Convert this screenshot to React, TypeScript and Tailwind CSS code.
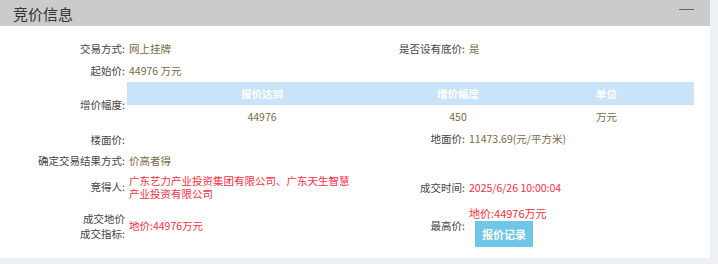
import React from "react";

const font = { fontFamily: '"Noto Sans CJK SC", "Liberation Sans", sans-serif' };

function Label({ children }: { children: React.ReactNode }) {
    return <div className="flex items-center justify-end pr-[2px] text-[#444]">{children}</div>;
}

function Value({ children, red }: { children: React.ReactNode; red?: boolean }) {
    return (
        <div className={"flex items-center pl-[2px] " + (red ? "text-[#ff2d3d]" : "text-[#7b6a45]")}>
            {children}
        </div>
    );
}

export default function App() {
    return (
        <div className="w-[718px] h-[264px] bg-[#edf1f4] flex items-start" style={font}>
            <div className="w-[710px] h-[258px] bg-white flex flex-col">
                <div className="h-[26px] bg-[#cbcbcb] flex items-center justify-between pl-[13px] pr-[16px]">
                    <span className="text-[15px] text-[#333] leading-none">竞价信息</span>
                    <span className="w-[15px] h-[1px] bg-[#666] mb-[8px]"></span>
                </div>
                <div className="grid grid-cols-[127px_228px_112px_226px] text-[10.5px] leading-[13px] pt-[12px]">
                    {/* row 1 */}
                    <Label>交易方式:</Label>
                    <div className="h-[21px] flex"><Value>网上挂牌</Value></div>
                    <Label>是否设有底价:</Label>
                    <Value>是</Value>
                    {/* row 2 */}
                    <Label>起始价:</Label>
                    <div className="h-[22px] flex col-span-3"><Value>44976 万元</Value></div>
                    {/* row 3 */}
                    <Label>增价幅度:</Label>
                    <div className="col-span-3 pt-[1px]">
                        <div className="grid grid-cols-[270px_122px_175px] text-center">
                            <div className="h-[23px] bg-[#c9e4f8] col-span-3 grid grid-cols-[270px_122px_175px] items-center font-bold text-white">
                                <span>报价达到</span>
                                <span>增价幅度</span>
                                <span>单位</span>
                            </div>
                            <div className="h-[23px] flex items-center justify-center text-[#7b6a45]">44976</div>
                            <div className="h-[23px] flex items-center justify-center text-[#7b6a45]">450</div>
                            <div className="h-[23px] flex items-center justify-center text-[#7b6a45]">万元</div>
                        </div>
                    </div>
                    {/* row 4 */}
                    <Label>楼面价:</Label>
                    <div className="h-[22px]"></div>
                    <div className="flex items-center justify-end pr-[2px] text-[#444] pb-[2px]">地面价:</div>
                    <div className="flex items-center pl-[2px] text-[#7b6a45] pb-[2px]">11473.69(元/平方米)</div>
                    {/* row 5 */}
                    <Label>确定交易结果方式:</Label>
                    <div className="h-[20px] flex col-span-3"><Value>价高者得</Value></div>
                    {/* row 6 */}
                    <div className="flex items-center justify-end pr-[2px] text-[#444] pb-[2px]">竞得人:</div>
                    <div className="h-[34px] flex items-center pl-[2px] text-[#ff2d3d] leading-[12.5px] pt-[1px]">
                        广东艺力产业投资集团有限公司、广东天生智慧产业投资有限公司
                    </div>
                    <Label>成交时间:</Label>
                    <Value red>2025/6/26 10:00:04</Value>
                    {/* row 7 */}
                    <div className="flex items-center justify-end pr-[2px] text-[#444] text-right leading-[15px]">
                        成交地价<br />成交指标:
                    </div>
                    <Value red>地价:44976万元</Value>
                    <Label>最高价:</Label>
                    <div className="flex flex-col items-start pl-[2px] pt-[2px]">
                        <span className="text-[#ff2d3d] text-[11px] leading-[14px]">地价:44976万元</span>
                        <button className="ml-[6px] mt-[1px] w-[58px] h-[26px] bg-[#6fc6e6] text-white font-bold text-[11px]">报价记录</button>
                    </div>
                </div>
            </div>
        </div>
    );
}
